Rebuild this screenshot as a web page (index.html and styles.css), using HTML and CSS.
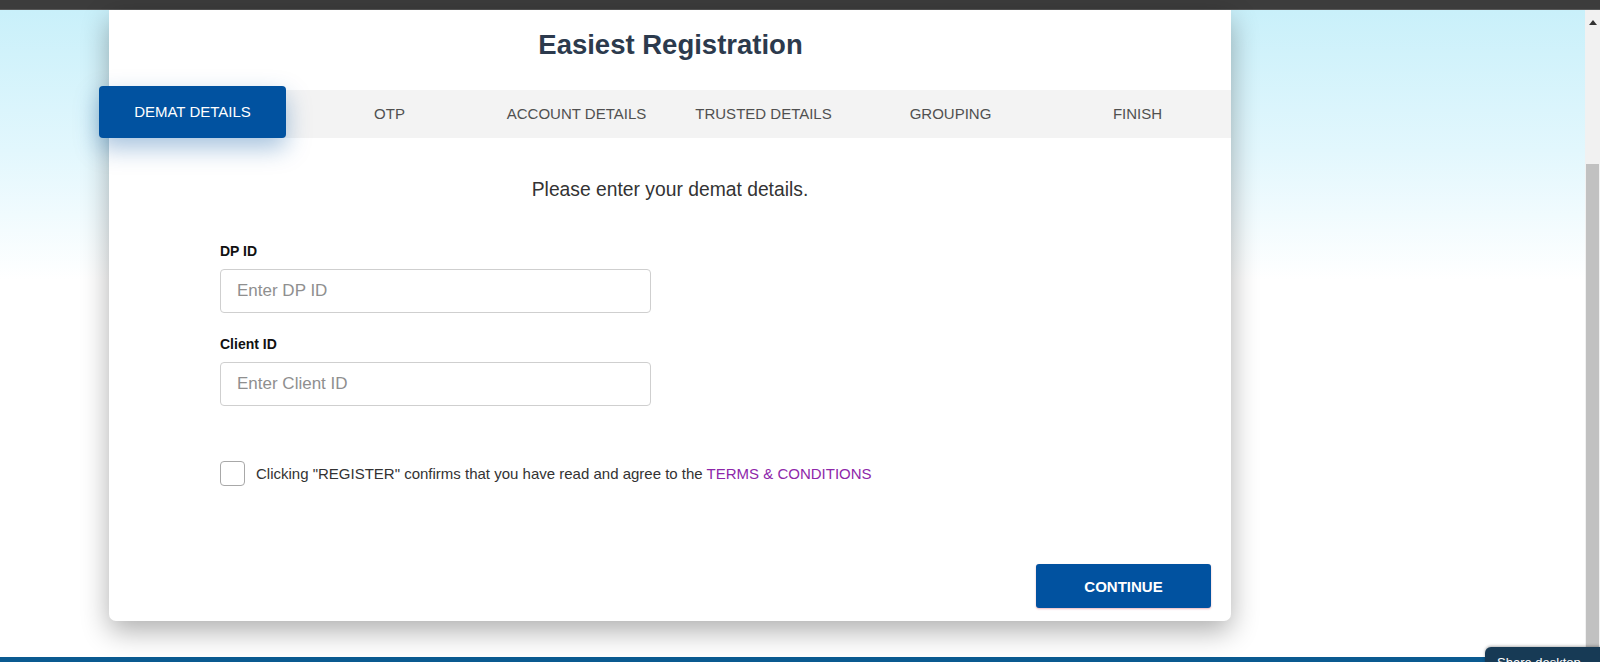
FILE: index.html
```html
<!DOCTYPE html>
<html lang="en">
<head>
<meta charset="utf-8">
<title>Easiest Registration</title>
<link rel="stylesheet" href="styles.css">
</head>
<body>
<div class="topbar"></div>
<div class="window">
  <div class="viewport">
    <div class="stage">
      <div class="card">
        <h1 class="title">Easiest Registration</h1>
        <div class="tabs">
          <div class="tab active">DEMAT DETAILS</div>
          <div class="tab">OTP</div>
          <div class="tab">ACCOUNT DETAILS</div>
          <div class="tab">TRUSTED DETAILS</div>
          <div class="tab">GROUPING</div>
          <div class="tab">FINISH</div>
        </div>
        <p class="intro">Please enter your demat details.</p>
        <form class="form">
          <label class="label" for="dp">DP ID</label>
          <input class="field" id="dp" type="text" placeholder="Enter DP ID">
          <label class="label second" for="client">Client ID</label>
          <input class="field" id="client" type="text" placeholder="Enter Client ID">
          <div class="agree">
            <span class="check"></span>
            <span class="agree-text">Clicking "REGISTER" confirms that you have read and agree to the <a class="terms" href="#">TERMS &amp; CONDITIONS</a></span>
          </div>
          <div class="actions">
            <button type="button" class="continue">CONTINUE</button>
          </div>
        </form>
      </div>
    </div>
    <div class="strip"></div>
  </div>
  <div class="scrollbar">
    <div class="arrow"></div>
    <div class="thumb"></div>
  </div>
  <div class="share">Share desktop</div>
</div>
</body>
</html>
```

FILE: styles.css
```css
* { box-sizing: border-box; }

html, body {
  margin: 0;
  padding: 0;
  width: 1600px;
  height: 662px;
  overflow: hidden;
  font-family: "Liberation Sans", Arial, sans-serif;
}

.topbar {
  height: 10px;
  background: #3c3c3c;
  border-bottom: 1px solid #575757;
}

.window {
  position: relative;
  display: flex;
  height: 652px;
}

.viewport {
  flex: 1;
  display: flex;
  flex-direction: column;
  background: linear-gradient(#c9f0fa 0px, #e2f7fd 140px, #ffffff 270px);
}

.stage {
  flex: 1;
  padding-left: 109px;
}

.strip {
  height: 5px;
  background: #0a5a90;
}

.card {
  width: 1122px;
  height: 611px;
  background: #fff;
  border-radius: 0 0 7px 7px;
  box-shadow: 0 10px 28px rgba(0, 0, 0, 0.32);
  display: flex;
  flex-direction: column;
}

.title {
  margin: 0;
  padding-top: 18px;
  height: 80px;
  line-height: 34px;
  text-align: center;
  font-size: 27.5px;
  font-weight: bold;
  color: #2c3a4d;
  padding-left: 1px;
}

.tabs {
  display: grid;
  grid-template-columns: repeat(6, 187px);
  height: 48px;
  background: #f3f3f3;
}

.tab {
  display: flex;
  align-items: center;
  justify-content: center;
  font-size: 15px;
  color: #505050;
  padding-bottom: 2px;
}

.tab.active {
  margin: -4px 10px 0 -10px;
  background: #0152a0;
  color: #fff;
  border-radius: 4px;
  box-shadow: 0 10px 24px rgba(1, 82, 160, 0.35);
}

.intro {
  margin: 41px 0 0;
  text-align: center;
  font-size: 19.3px;
  line-height: 22px;
  color: #333;
}

.form {
  flex: 1;
  display: flex;
  flex-direction: column;
  padding: 42px 20px 13px 111px;
}

.label {
  display: block;
  font-size: 14px;
  line-height: 16px;
  font-weight: bold;
  color: #111;
  margin-bottom: 10px;
}

.label.second {
  margin-top: 23px;
}

.field {
  width: 431px;
  height: 44px;
  border: 1px solid #cfcfcf;
  border-radius: 4px;
  padding: 0 16px;
  font-family: inherit;
  font-size: 17px;
  color: #333;
  outline: none;
}

.field::placeholder {
  color: #8f8f8f;
}

.agree {
  display: flex;
  align-items: center;
  margin-top: 55px;
  gap: 11px;
}

.check {
  width: 25px;
  height: 25px;
  border: 1px solid #a8a8a8;
  border-radius: 4px;
  background: #fff;
}

.agree-text {
  font-size: 15px;
  color: #333;
  padding-bottom: 1px;
}

.terms {
  color: #8e27aa;
  text-decoration: none;
}

.actions {
  margin-top: auto;
  display: flex;
  justify-content: flex-end;
}

.continue {
  width: 175px;
  height: 44px;
  border: none;
  border-radius: 3px;
  background: #0152a0;
  color: #fff;
  font-family: inherit;
  font-size: 15px;
  font-weight: bold;
  padding-bottom: 1px;
  box-shadow: 0 1px 2px rgba(200, 40, 60, 0.35);
}

.scrollbar {
  width: 15px;
  background: #f1f1f1;
  display: flex;
  flex-direction: column;
  align-items: center;
}

.arrow {
  margin-top: 10px;
  width: 0;
  height: 0;
  border-left: 4px solid transparent;
  border-right: 4px solid transparent;
  border-bottom: 5px solid #333;
}

.thumb {
  margin-top: 139px;
  width: 13px;
  flex: 1;
  background: #c1c1c1;
}

.share {
  position: absolute;
  left: 1485px;
  top: 637px;
  width: 115px;
  height: 20px;
  background: #173a55;
  border-radius: 6px 0 0 0;
  color: #fff;
  font-size: 13px;
  line-height: 15px;
  padding: 8px 0 0 12px;
  white-space: nowrap;
  overflow: hidden;
  box-shadow: 0 -1px 3px rgba(0,0,0,0.3);
}
```
